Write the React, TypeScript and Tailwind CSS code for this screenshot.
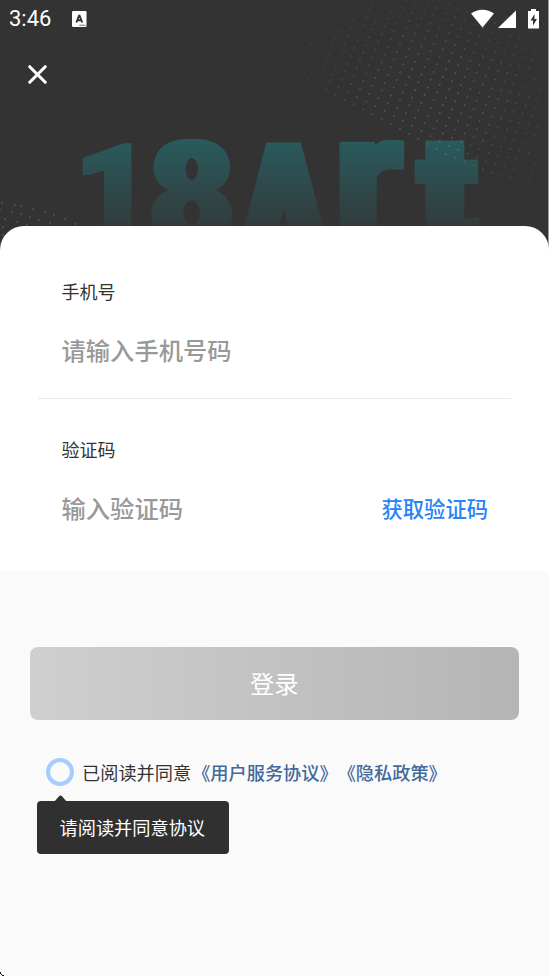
import { X } from 'lucide-react'

const EDGE = [
  [255, 62],
  [275, 68],
  [308, 80],
  [345, 100],
  [382, 119],
  [410, 134],
  [446, 154],
  [492, 173],
  [537, 183],
  [570, 187],
]

const edgeY = (x: number) => {
  for (let i = 1; i < EDGE.length; i++) {
    const [x0, y0] = EDGE[i - 1]
    const [x1, y1] = EDGE[i]
    if (x <= x1) return y0 + ((x - x0) * (y1 - y0)) / (x1 - x0)
  }
  return 187
}

const dots: { x: number; y: number; o: number }[] = []
for (let row = 0; row < 19; row++) {
  for (let i = 0; i < 34; i++) {
    const step = 9.2
    const x = 262 + i * step + (row % 3) * 3
    const y = edgeY(x) - row * 9.4
    if (x > 546 || y < 0) continue
    const dx = (x - 430) / 100
    const dy = (y - 105) / 90
    dots.push({ x, y, o: 0.2 * Math.exp(-(dx * dx + dy * dy) * 0.7) })
  }
}

const cornerDots = [
  [2, 203], [15, 205], [21, 206], [33, 209], [45, 212], [54, 215], [65, 219], [75, 224],
  [0, 210], [12, 212], [21, 214], [30, 217], [39, 220], [50, 223],
  [5, 219], [17, 222], [27, 225], [3, 227], [3, 235],
]

// baseline position, horizontal stretch, size, outline and sideways widening of each letter
const letters = [
  { char: '1', x: 75, y: 241, sx: 0.95, size: 138, stroke: 0, widen: 3 },
  { char: '8', x: 149, y: 243, sx: 1.03, size: 143, stroke: 0, widen: 4 },
  { char: 'A', x: 232, y: 294, sx: 0.71, size: 214, stroke: 0, widen: 5 },
  { char: 'r', x: 335, y: 241, sx: 0.95, size: 187, stroke: 0, widen: 4 },
  { char: 't', x: 420, y: 240, sx: 1.1, size: 145, stroke: 8, widen: 2 },
]

function Backdrop() {
  return (
    <svg className="absolute inset-0" width="549" height="250" viewBox="0 0 549 250">
      {letters.map((l) => (
        <g key={l.char} filter={`url(#widen-${l.char})`}>
          <linearGradient
            id={`fade-${l.char}`}
            gradientUnits="userSpaceOnUse"
            x1="0"
            y1={139 - l.y}
            x2="0"
            y2={228 - l.y}
          >
            <stop offset="0" stopColor="#295b5d" />
            <stop offset="1" stopColor="#333a3b" />
          </linearGradient>
          <filter
            id={`widen-${l.char}`}
            filterUnits="userSpaceOnUse"
            x="60"
            y="120"
            width="440"
            height="130"
            colorInterpolationFilters="sRGB"
          >
            <feMorphology operator="dilate" radius={`${l.widen} 0.01`} />
          </filter>
          <text
            transform={`translate(${l.x} ${l.y}) scale(${l.sx} 1)`}
            fontSize={l.size}
            fill={`url(#fade-${l.char})`}
            stroke={`url(#fade-${l.char})`}
            strokeWidth={l.stroke}
            className="font-[Roboto,sans-serif] font-black"
          >
            {l.char}
          </text>
        </g>
      ))}
      {dots.map((d, i) => (
        <circle key={i} cx={d.x} cy={d.y} r="0.9" fill="#fff" opacity={d.o} />
      ))}
      {cornerDots.map(([x, y], i) => (
        <circle key={i} cx={x} cy={y} r="0.8" fill="#fff" opacity="0.26" />
      ))}
    </svg>
  )
}

function StatusBar() {
  return (
    <div className="relative flex h-[37px] items-center pl-[9px] pr-[8px] text-white">
      <span className="w-[42px] font-[Roboto,sans-serif] text-[22px] leading-none">3:46</span>
      <svg className="ml-[21px]" width="15" height="16" viewBox="0 0 15 16">
        <rect width="14.5" height="16" rx="1.2" fill="#fff" />
        <path d="M4.4 11.5 7 4.600H7.600L10.200 11.500M5.4 9.2H9.2" fill="none" stroke="#333" strokeWidth="1.9" />
        <path d="M7.5 14.2h6" stroke="#333" strokeWidth="1" strokeDasharray="1.2 .6" />
      </svg>
      <svg className="ml-auto" width="69" height="20" viewBox="0 0 69 20">
        <path d="M0 4.5C6.5-.6 16.500-.6 23 4.500L11.500 18.500Z" fill="#fff" />
        <path d="M45 1.500V19H27Z" fill="#fff" />
        <path d="M60 0h5v2h3v17.500H57V2h3Z" fill="#fff" />
        <path d="M63.500 5 59.500 11.500h2.500V16.500L66 10h-2.500Z" fill="#333" />
      </svg>
    </div>
  )
}

export default function App() {
  return (
    <div className="relative flex h-[976px] w-[549px] flex-col overflow-hidden bg-[#fafafa] font-['Noto_Sans_CJK_SC',sans-serif] text-[#333]">
      <header className="relative -mb-6 h-[250px] shrink-0 overflow-hidden border-r border-[#999] bg-[#333]">
        <Backdrop />
        <StatusBar />
        <button className="relative ml-[22px] mt-[22px] block text-white" aria-label="关闭">
          <X size={31} strokeWidth={2.4} />
        </button>
      </header>

      <main className="relative h-[345px] shrink-0 rounded-t-[24px] bg-white px-[38px]">
        <section className="h-[173px] border-b border-[#e9e9e9] pl-[23.500px] pr-6 pt-[52px]">
          <div className="text-[18px] leading-[26px]">手机号</div>
          <div className="mt-[28px] text-[24.300px] font-medium leading-[36px] text-[#999]">请输入手机号码</div>
        </section>
        <section className="pl-[23.500px] pr-6 pt-[37px]">
          <div className="text-[18px] leading-[26px]">验证码</div>
          <div className="mt-[28px] flex items-center justify-between leading-[36px]">
            <span className="text-[24.300px] font-medium text-[#999]">输入验证码</span>
            <button className="-mr-px text-[21.300px] font-medium text-[#2683f9]">获取验证码</button>
          </div>
        </section>
      </main>

      <button className="ml-[30px] mt-[76px] h-[73px] w-[488.500px] shrink-0 rounded-[8px] bg-linear-to-r from-[#cfcfcf] to-[#b5b5b5] text-[24.300px] text-white">
        登录
      </button>

      <div className="mt-[38px] flex h-7 items-center pl-[46px] text-[18.200px]">
        <span className="size-7 shrink-0 rounded-full border-4 border-[#a6ccff]" />
        <span className="ml-2 pt-px">已阅读并同意</span>
        <span className="ml-px pt-px font-medium text-[#43699c]">《用户服务协议》</span>
        <span className="pt-px font-medium text-[#43699c]">《隐私政策》</span>
      </div>

      <div className="relative ml-[37px] mt-[15px] flex h-[53px] w-[192px] items-center rounded-[4px] bg-[#303030] pl-[22.500px] text-[18.200px] text-white">
        <svg className="absolute -top-[6px] left-[17px]" width="13" height="7" viewBox="0 0 13 7">
          <path d="M0 7 5.500.8Q6.500 0 7.500.8L13 7Z" fill="#303030" />
        </svg>
        请阅读并同意协议
      </div>
      <svg className="absolute bottom-0 left-0" width="4" height="4" viewBox="0 0 4 4">
        <path d="M0 0h1v2h1v1h2v1h-2v-1h-1v-1H0Z" fill="#111" />
      </svg>
    </div>
  )
}
